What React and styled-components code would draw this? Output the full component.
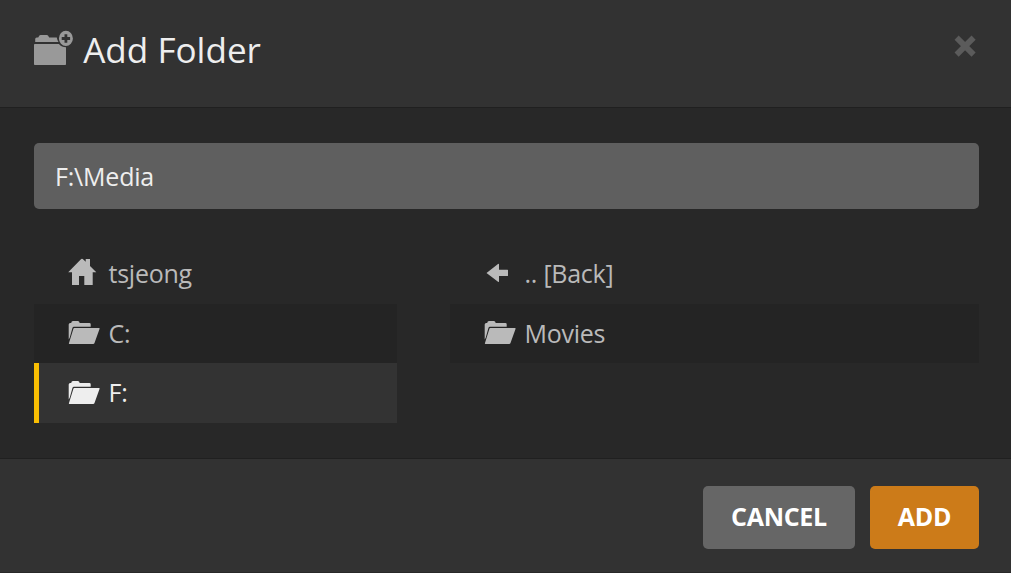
import React from 'react';
import styled, { createGlobalStyle } from 'styled-components';

const GlobalStyle = createGlobalStyle`
  *, *::before, *::after { box-sizing: border-box; }
  body {
    margin: 0;
    background: #282828;
    font-family: "Open Sans", "Noto Sans", sans-serif;
  }
`;

const Dialog = styled.div`
  display: flex;
  flex-direction: column;
  width: 100%;
  height: 100vh;
  overflow: hidden;
  background: #282828;
`;

const Header = styled.header`
  display: flex;
  align-items: flex-start;
  height: 108px;
  flex: none;
  padding: 26px 32px 0 34px;
  background: #323232;
  border-bottom: 1px solid #202020;
`;

const Title = styled.h1`
  flex: 1;
  margin: 0 0 0 9.2px;
  font-size: 35.1px;
  font-weight: 400;
  line-height: 46px;
  color: #eee;
`;

const CloseButton = styled.button`
  margin: 7px 2px 0 0;
  padding: 0;
  border: 0;
  background: none;
  line-height: 0;
  color: #5b5b5b;
`;

const Body = styled.main`
  flex: 1;
  padding: 35px 32px 0 34px;
`;

const PathInput = styled.input`
  display: block;
  width: 100%;
  height: 66px;
  margin-bottom: 35px;
  padding: 0 21px 1px 21px;
  border: 0;
  border-radius: 5px;
  outline: 0;
  background: #5f5f5f;
  color: #eee;
  font: 400 25px "Open Sans", "Noto Sans", sans-serif;
  letter-spacing: -0.2px;
`;

const Browser = styled.div`
  display: grid;
  grid-template-columns: 363px 529px;
  column-gap: 53px;
  align-items: start;
`;

const List = styled.ul`
  margin: 0;
  padding: 0;
  list-style: none;
`;

const Row = styled.li`
  display: flex;
  align-items: center;
  height: ${(p) => (p.$striped ? 59 : 60)}px;
  padding-left: ${(p) => (p.$selected ? 29 : 34)}px;
  border-left: ${(p) => (p.$selected ? '5px solid #f9be03' : '0')};
  background: ${(p) => (p.$selected ? '#333' : p.$striped ? '#242424' : 'transparent')};
  color: ${(p) => (p.$selected ? '#eee' : '#bababa')};
  font-size: 25px;
  letter-spacing: -0.25px;
  line-height: 34px;

  > svg {
    margin-top: ${(p) => (p.$selected ? 2 : 0)}px;
  }

  > span {
    padding-bottom: ${(p) => (p.$striped ? 1 : 2)}px;
  }
`;

const RowLabel = styled.span`
  margin-left: 8.5px;
`;

const RowIcon = styled.svg`
  flex: none;
  width: 32px;
  height: 32px;
  fill: currentColor;
`;

const Footer = styled.footer`
  display: flex;
  justify-content: flex-end;
  gap: 15px;
  flex: none;
  height: 115px;
  padding: 27px 32px 0;
  background: #323232;
  border-top: 1px solid #202020;
  border-bottom: 1px solid #282828;
`;

const Button = styled.button`
  width: ${(p) => (p.$primary ? 109 : 152)}px;
  height: 63px;
  padding: 0 0 3px;
  border: 0;
  border-radius: 5px;
  background: ${(p) => (p.$primary ? '#cc7b19' : '#666')};
  color: #fff;
  font: 700 25px "Open Sans", "Noto Sans", sans-serif;
  letter-spacing: -0.3px;
`;

const AddFolderIcon = () => (
  <svg width="40" height="40" viewBox="0 0 40 40" aria-hidden="true">
    <path fill="#999" d="M1.200 16V13q0-1.600 1.600-1.600h1.400l1.200-1.900q.5-.5 1.200-.5h6.200q.8 0 1.200.5l1.200 1.900h7.600q.4 2.600 1.700 4.600z" />
    <path fill="#999" d="M.8 18h24.100q2.800 3.300 7.100 3.300V38.200q0 .8-.8.8H.8q-.8 0-.8-.8V18.800q0-.8.8-.8z" />
    <path
      fill="#999"
      fillRule="evenodd"
      d="M31.900 4.800a7 7.600 0 1 0 0 15.200a7 7.600 0 1 0 0-15.200zM30.500 8.200h2.800v2.800h2.800v2.900h-2.800v2.800h-2.800v-2.800h-2.800V11h2.800z"
    />
  </svg>
);

const CloseIcon = () => (
  <svg width="24" height="24" viewBox="0 0 24 24" aria-hidden="true">
    <path d="M3.600 4.600l17 17M20.600 4.600l-17 17" stroke="currentColor" strokeWidth="5.800" />
  </svg>
);

const HomeIcon = () => (
  <RowIcon viewBox="0 0 32 32" aria-hidden="true">
    <path d="M14 .8q.7 0 1.300.6l2.400 2.400V1h4.300v7.100l6.300 6.100H24.700V27H16.300V18H11v9H4V14.200H.2L12.700 1.400q.6-.6 1.300-.6z" />
  </RowIcon>
);

const FolderIcon = () => (
  <RowIcon viewBox="0.3 0 32 32" aria-hidden="true">
    <path d="M1 21.500V6.500Q1 5 2.500 5H3.500Q3.700 3 5.300 3H10.200Q11.600 3 12 5H21.700Q23 5 23 6.300V8.700H6.200Q5.200 8.700 4.800 9.700L2 19.700Z" />
    <path d="M6.600 10H31.400Q32.100 10 31.900 10.700L26.700 25.200Q26.400 26 25.500 26H1.700Q.9 26 1.200 25.200L5.700 10.700Q5.900 10 6.600 10z" />
  </RowIcon>
);

const BackIcon = () => (
  <RowIcon viewBox="0 0 32 32" aria-hidden="true">
    <path d="M2.500 15L14 6q1-.6 1 .5v5.200h8.500q.5 0 .5.500v5.300q0 .5-.5.500H15v5.300q0 1.100-1 .5z" />
  </RowIcon>
);

export default function App() {
  return (
    <>
      <GlobalStyle />
      <Dialog role="dialog" aria-label="Add Folder">
        <Header>
          <AddFolderIcon />
          <Title>Add Folder</Title>
          <CloseButton aria-label="Close"><CloseIcon /></CloseButton>
        </Header>
        <Body>
          <PathInput defaultValue={'F:\\Media'} aria-label="Path" />
          <Browser>
            <List>
              <Row><HomeIcon /><RowLabel>tsjeong</RowLabel></Row>
              <Row $striped><FolderIcon /><RowLabel>C:</RowLabel></Row>
              <Row $selected><FolderIcon /><RowLabel>F:</RowLabel></Row>
            </List>
            <List>
              <Row><BackIcon /><RowLabel>.. [Back]</RowLabel></Row>
              <Row $striped><FolderIcon /><RowLabel>Movies</RowLabel></Row>
            </List>
          </Browser>
        </Body>
        <Footer>
          <Button>CANCEL</Button>
          <Button $primary>ADD</Button>
        </Footer>
      </Dialog>
    </>
  );
}
